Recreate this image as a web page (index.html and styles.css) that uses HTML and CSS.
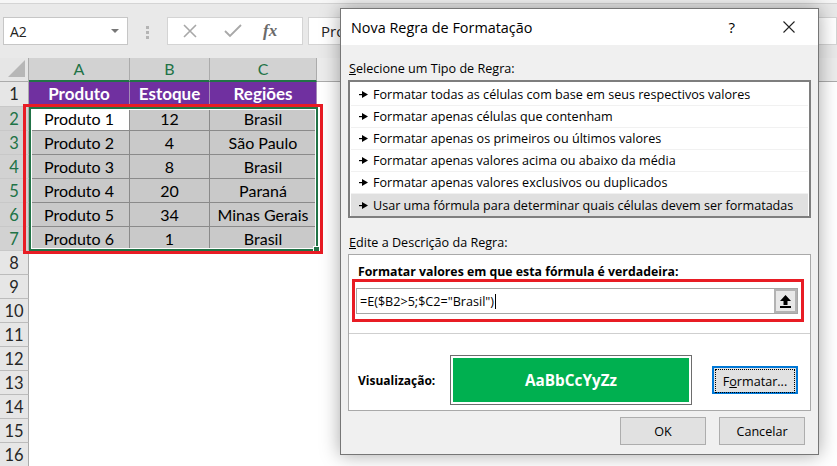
FILE: index.html
```html
<!DOCTYPE html>
<html lang="pt-BR">
<head>
  <meta charset="UTF-8" />
  <title>Nova Regra de Formatação</title>
  <link rel="stylesheet" href="styles.css">
</head>
<body>
<div class="excel">
  <div class="ribbon-edge"></div>
  <div class="formula-bar">
    <div class="name-box"><span>A2</span><span class="caret"></span></div>
    <div class="grip"><i></i><i></i><i></i></div>
    <div class="fx-box">
      <svg width="14" height="14" viewBox="0 0 14 14"><path d="M1 1L13 13M13 1L1 13" stroke="#a8a8a8" stroke-width="1.6" fill="none"/></svg>
      <svg width="18" height="14" viewBox="0 0 18 14"><path d="M1 7L6 12L17 1" stroke="#a8a8a8" stroke-width="1.8" fill="none"/></svg>
      <span class="fx">fx</span>
    </div>
    <div class="formula-input">Produto 1</div>
  </div>

  <div class="sheet">
    <div class="row col-head">
      <div class="rh corner"><svg width="17" height="17" viewBox="0 0 17 17"><polygon points="17,0 17,17 0,17" fill="#b7b7b7"/></svg></div>
      <div class="c a sel">A</div><div class="c b sel">B</div><div class="c cc sel">C</div><div class="rest"></div>
    </div>
    <div class="row head-row">
      <div class="rh">1</div>
      <div class="c a">Produto</div><div class="c b">Estoque</div><div class="c cc">Regiões</div><div class="rest"></div>
    </div>
    <div class="data">
      <div class="row"><div class="rh sel">2</div><div class="c a active">Produto 1</div><div class="c b">12</div><div class="c cc">Brasil</div><div class="rest"></div></div>
      <div class="row"><div class="rh sel">3</div><div class="c a">Produto 2</div><div class="c b">4</div><div class="c cc">São Paulo</div><div class="rest"></div></div>
      <div class="row"><div class="rh sel">4</div><div class="c a">Produto 3</div><div class="c b">8</div><div class="c cc">Brasil</div><div class="rest"></div></div>
      <div class="row"><div class="rh sel">5</div><div class="c a">Produto 4</div><div class="c b">20</div><div class="c cc">Paraná</div><div class="rest"></div></div>
      <div class="row"><div class="rh sel">6</div><div class="c a">Produto 5</div><div class="c b">34</div><div class="c cc">Minas Gerais</div><div class="rest"></div></div>
      <div class="row"><div class="rh sel">7</div><div class="c a">Produto 6</div><div class="c b">1</div><div class="c cc">Brasil</div><div class="rest"></div></div>
      <div class="selection"><span class="handle"></span></div>
      <div class="mark-red sheet-mark"></div>
    </div>
    <div class="row empty"><div class="rh">8</div><div class="rest"></div></div>
    <div class="row empty"><div class="rh">9</div><div class="rest"></div></div>
    <div class="row empty"><div class="rh">10</div><div class="rest"></div></div>
    <div class="row empty"><div class="rh">11</div><div class="rest"></div></div>
    <div class="row empty"><div class="rh">12</div><div class="rest"></div></div>
    <div class="row empty"><div class="rh">13</div><div class="rest"></div></div>
    <div class="row empty"><div class="rh">14</div><div class="rest"></div></div>
    <div class="row empty"><div class="rh">15</div><div class="rest"></div></div>
    <div class="row empty"><div class="rh">16</div><div class="rest"></div></div>
  </div>
</div>

<div class="dialog">
  <div class="dlg-title">
    <span class="dlg-name">Nova Regra de Formatação</span>
    <span class="dlg-help">?</span>
    <svg class="dlg-close" width="12" height="12" viewBox="0 0 12 12"><path d="M0.5 0.5L11.5 11.5M11.5 0.5L0.5 11.5" stroke="#222" stroke-width="1.1" fill="none"/></svg>
  </div>
  <div class="dlg-body">
    <div class="label"><u>S</u>elecione um Tipo de Regra:</div>
    <div class="rule-list">
      <div class="rule"><svg width="9" height="7" viewBox="0 0 9 7"><rect x="0" y="3" width="3" height="1.2" fill="#000"/><polygon points="3,0 9,3.5 3,7" fill="#000"/></svg>Formatar todas as células com base em seus respectivos valores</div>
      <div class="rule"><svg width="9" height="7" viewBox="0 0 9 7"><rect x="0" y="3" width="3" height="1.2" fill="#000"/><polygon points="3,0 9,3.5 3,7" fill="#000"/></svg>Formatar apenas células que contenham</div>
      <div class="rule"><svg width="9" height="7" viewBox="0 0 9 7"><rect x="0" y="3" width="3" height="1.2" fill="#000"/><polygon points="3,0 9,3.5 3,7" fill="#000"/></svg>Formatar apenas os primeiros ou últimos valores</div>
      <div class="rule"><svg width="9" height="7" viewBox="0 0 9 7"><rect x="0" y="3" width="3" height="1.2" fill="#000"/><polygon points="3,0 9,3.5 3,7" fill="#000"/></svg>Formatar apenas valores acima ou abaixo da média</div>
      <div class="rule"><svg width="9" height="7" viewBox="0 0 9 7"><rect x="0" y="3" width="3" height="1.2" fill="#000"/><polygon points="3,0 9,3.5 3,7" fill="#000"/></svg>Formatar apenas valores exclusivos ou duplicados</div>
      <div class="rule picked"><svg width="9" height="7" viewBox="0 0 9 7"><rect x="0" y="3" width="3" height="1.2" fill="#000"/><polygon points="3,0 9,3.5 3,7" fill="#000"/></svg>Usar uma fórmula para determinar quais células devem ser formatadas</div>
    </div>

    <div class="label second"><u>E</u>dite a Descrição da Regra:</div>
    <div class="desc">
      <div class="desc-title">Formatar valores em que esta fórmula é verdadeira:</div>
      <div class="formula-field">
        <span class="formula-text">=E($B2&gt;5;$C2="Brasil")</span><span class="cursor"></span>
        <span class="collapse-btn"><svg width="11" height="13" viewBox="0 0 11 13"><polygon points="5.5,0 11,6 7.5,6 7.5,10 3.5,10 3.5,6 0,6" fill="#000"/><rect x="0" y="11" width="11" height="2" fill="#000"/></svg></span>
      </div>
      <div class="mark-red field-mark"></div>
      <div class="desc-line"></div>
      <div class="preview-row">
        <span class="preview-label">Visualização:</span>
        <div class="preview"><div class="preview-fill">AaBbCcYyZz</div></div>
        <button class="btn format-btn"><span>F<u>o</u>rmatar...</span></button>
      </div>
    </div>

    <div class="actions">
      <button class="btn">OK</button>
      <button class="btn">Cancelar</button>
    </div>
  </div>
</div>
</body>
</html>
```

FILE: styles.css
```css
body { margin: 0; width: 837px; height: 466px; overflow: hidden; position: relative; background: #fff; font-family: "Lato", "Open Sans", sans-serif; }

.ribbon-edge { height: 3px; background: #f6f6f6; border-bottom: 1px solid #d4d4d4; }
.formula-bar { height: 54px; background: #e9e9e9; display: flex; align-items: flex-start; padding-top: 13px; box-sizing: border-box; }
.name-box { margin-left: 3px; width: 125px; height: 28px; box-sizing: border-box; background: #fff; border: 1px solid #c6c6c6; display: flex; align-items: center; justify-content: space-between; padding: 0 8px 0 6px; font-family: "Open Sans", sans-serif; font-size: 14px; color: #222; }
.caret { width: 0; height: 0; border-left: 4px solid transparent; border-right: 4px solid transparent; border-top: 4px solid #777; }
.grip { width: 39px; display: flex; flex-direction: column; align-items: center; gap: 2px; padding-top: 9px; }
.grip i { width: 3px; height: 3px; background: #b4b4b4; }
.fx-box { width: 136px; height: 28px; box-sizing: border-box; background: #fff; border: 1px solid #d4d4d4; display: flex; align-items: center; padding-left: 15px; gap: 27px; }
.fx { font-family: "Liberation Serif", serif; font-style: italic; font-weight: bold; font-size: 17px; color: #6a6a6a; margin-left: -6px; }
.formula-input { margin-left: 5px; flex: 1; height: 28px; box-sizing: border-box; background: #fff; border: 1px solid #d4d4d4; padding-left: 12px; font-family: "Open Sans", sans-serif; font-size: 15px; line-height: 26px; color: #222; white-space: nowrap; }

.sheet { font-size: 16px; }
.row { display: flex; height: 24px; }
.rh { width: 29px; box-sizing: border-box; background: #e6e6e6; border-right: 1px solid #ababab; border-bottom: 1px solid #c8c8c8; text-align: center; line-height: 24px; color: #262626; font-size: 16.5px; }
.rh.sel { background: #d2d2d2; color: #217346; }
.c { box-sizing: border-box; text-align: center; border-right: 1px solid #8a8a8a; border-bottom: 1px solid #8a8a8a; line-height: 23px; color: #000; background: #c9c9c9; white-space: nowrap; overflow: hidden; }
.c.a { width: 101px; }
.c.b { width: 80px; }
.c.cc { width: 107px; }
.c.active { background: #fff; }
.rest { flex: 1; }

.col-head .corner { position: relative; display: flex; align-items: flex-end; justify-content: flex-end; padding: 0 3px 4px 0; border-bottom: 1px solid #ababab; }
.col-head .c { background: #d2d2d2; color: #217346; border-right: 1px solid #ababab; border-bottom: 2px solid #217346; line-height: 22px; }
.col-head .rest { background: #ececec; border-bottom: 1px solid #ababab; }

.head-row { height: 25px; }
.head-row .rh { line-height: 25px; }
.head-row .c { background: #7030a0; color: #fff; font-weight: bold; font-size: 17px; border-right: 1px solid #a48ab8; border-bottom: 1px solid #8a8a8a; line-height: 24px; }

.data { position: relative; }
.selection { position: absolute; left: 29px; top: 0; width: 289px; height: 144px; box-sizing: border-box; border: 2px solid #217346; box-shadow: inset 0 0 0 1px #fff; }
.handle { position: absolute; right: -4px; bottom: -4px; width: 5px; height: 5px; background: #217346; border: 1px solid #fff; }
.mark-red { position: absolute; box-sizing: border-box; border: 3px solid #e81c24; }
.sheet-mark { left: 23px; top: -3px; width: 300px; height: 150px; }
.empty .rh { border-bottom: 1px solid #bcbcbc; }

.dialog { position: absolute; left: 340px; top: 8px; width: 479px; height: 447px; box-sizing: border-box; border: 1px solid #767676; background: #f0f0f0; box-shadow: 0 0 18px rgba(0,0,0,0.35); font-family: "Open Sans", sans-serif; font-size: 12.6px; color: #000; }
.dlg-title { height: 36px; background: #fff; display: flex; align-items: center; padding-left: 10px; }
.dlg-name { font-size: 14.4px; flex: 1; }
.dlg-help { font-size: 15px; margin-right: 48px; }
.dlg-close { margin-right: 23px; }
.dlg-body { padding: 16px 7px 9px; }
.label { line-height: 16px; padding-left: 1px; margin-bottom: 3px; }
.label.second { margin-top: 17px; }

.rule-list { height: 138px; box-sizing: border-box; background: #fff; border: 2px solid #7e7e7e; padding: 2px 1px; }
.rule { height: 22px; box-sizing: border-box; border-bottom: 1px solid #f1f1f1; display: flex; align-items: center; padding-left: 8px; gap: 5px; white-space: nowrap; }
.rule.picked { background: #e0e0e0; border-bottom: none; }

.desc { position: relative; height: 157px; box-sizing: border-box; background: #fff; border: 1px solid #a9a9a9; padding-top: 9px; }
.desc-title { font-weight: bold; font-size: 12.3px; line-height: 16px; padding-left: 9px; }
.formula-field { margin: 8px 0 0 7px; width: 442px; height: 26px; box-sizing: border-box; border: 1px solid #a6a6a6; display: flex; align-items: center; padding-left: 3px; }
.formula-text { font-size: 12.6px; }
.cursor { width: 1px; height: 15px; background: #000; margin-left: 1px; }
.collapse-btn { margin-left: auto; width: 23px; height: 24px; box-sizing: border-box; background: #e8e8e8; border: 2px solid #b3b3b3; display: flex; align-items: center; justify-content: center; }
.field-mark { left: 3px; top: 24px; width: 452px; height: 43px; }
.desc-line { height: 1px; background: #cfcfcf; margin-top: 19px; }
.preview-row { display: flex; align-items: center; margin-top: 21px; padding-left: 9px; }
.preview-label { font-weight: bold; font-size: 12px; width: 92px; }
.preview { width: 242px; height: 50px; box-sizing: border-box; border: 1px solid #6d6d6d; padding: 2px; background: #fff; }
.preview-fill { height: 100%; background: #00b050; color: #fff; font-weight: bold; font-size: 15.3px; display: flex; align-items: center; justify-content: center; }

.btn { width: 86px; height: 28px; box-sizing: border-box; background: #e1e1e1; border: 1px solid #adadad; font-family: "Open Sans", sans-serif; font-size: 12.6px; color: #000; padding: 0; }
.format-btn { margin-left: 20px; border: 2px solid #0078d7; padding: 1px; }
.format-btn span { display: flex; height: 100%; align-items: center; justify-content: center; border: 1px dotted #000; }
.actions { display: flex; justify-content: flex-end; gap: 13px; margin-top: 6px; padding-right: 6px; }
```
